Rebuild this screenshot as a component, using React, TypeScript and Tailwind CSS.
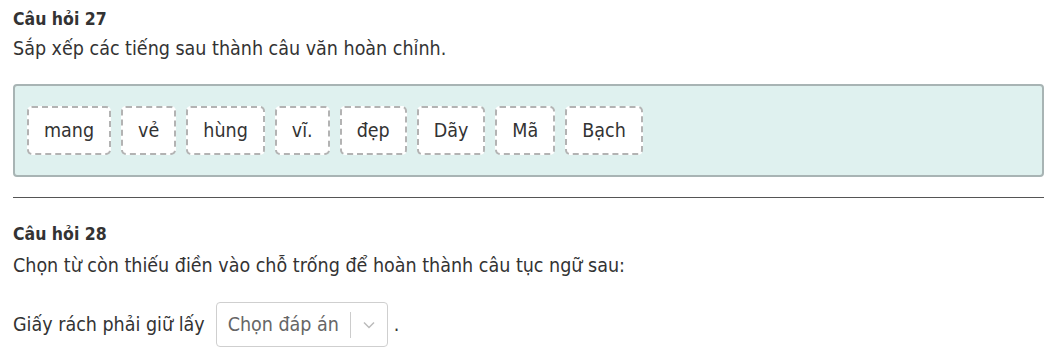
const words = ['mang', 'vẻ', 'hùng', 'vĩ.', 'đẹp', 'Dãy', 'Mã', 'Bạch']

export default function App() {
  return (
    <div
      className="bg-white px-[13px] pt-[7px] text-[19.5px] text-[#333]"
      style={{ fontFamily: '"DejaVu Sans Condensed", "DejaVu Sans", sans-serif' }}
    >
      {/* Question 27 */}
      <div className="text-[17.5px] font-bold leading-[24px]">Câu hỏi 27</div>
      <p className="mt-[6px] leading-[24px]">Sắp xếp các tiếng sau thành câu văn hoàn chỉnh.</p>

      <div className="mt-[23px] flex flex-wrap gap-[10px] rounded-[4px] border-2 border-[#a8b4b4] bg-[#dff1ef] px-[12px] py-[20px]">
        {words.map((w) => (
          <div
            key={w}
            className="flex h-[49px] items-center rounded-[5px] border-2 border-dashed border-[#b3b3b3] bg-white px-[15px]"
          >
            {w}
          </div>
        ))}
      </div>

      <hr className="mt-[20px] border-t border-[#555]" />

      {/* Question 28 */}
      <div className="mt-[24px] text-[17.5px] font-bold leading-[24px]">Câu hỏi 28</div>
      <p className="mt-[8px] leading-[24px]">Chọn từ còn thiếu điền vào chỗ trống để hoàn thành câu tục ngữ sau:</p>

      <div className="mt-[24px] flex items-center">
        <span>Giấy rách phải giữ lấy</span>
        <div className="ml-[11px] flex h-[45px] w-[172px] items-center rounded-[4px] border border-[#cfcfcf] bg-white">
          <span className="flex-1 pl-[11px] text-[#666]">Chọn đáp án</span>
          <span className="h-[26px] w-px bg-[#ccc]" />
          <span className="flex w-[36px] justify-center text-[#bbb]">
            <svg width="12" height="8" viewBox="0 0 12 8" fill="none" stroke="currentColor" strokeWidth="1.5">
              <path d="M1 1.5 6 6.5 11 1.5" />
            </svg>
          </span>
        </div>
        <span className="ml-[6px]">.</span>
      </div>
    </div>
  )
}
